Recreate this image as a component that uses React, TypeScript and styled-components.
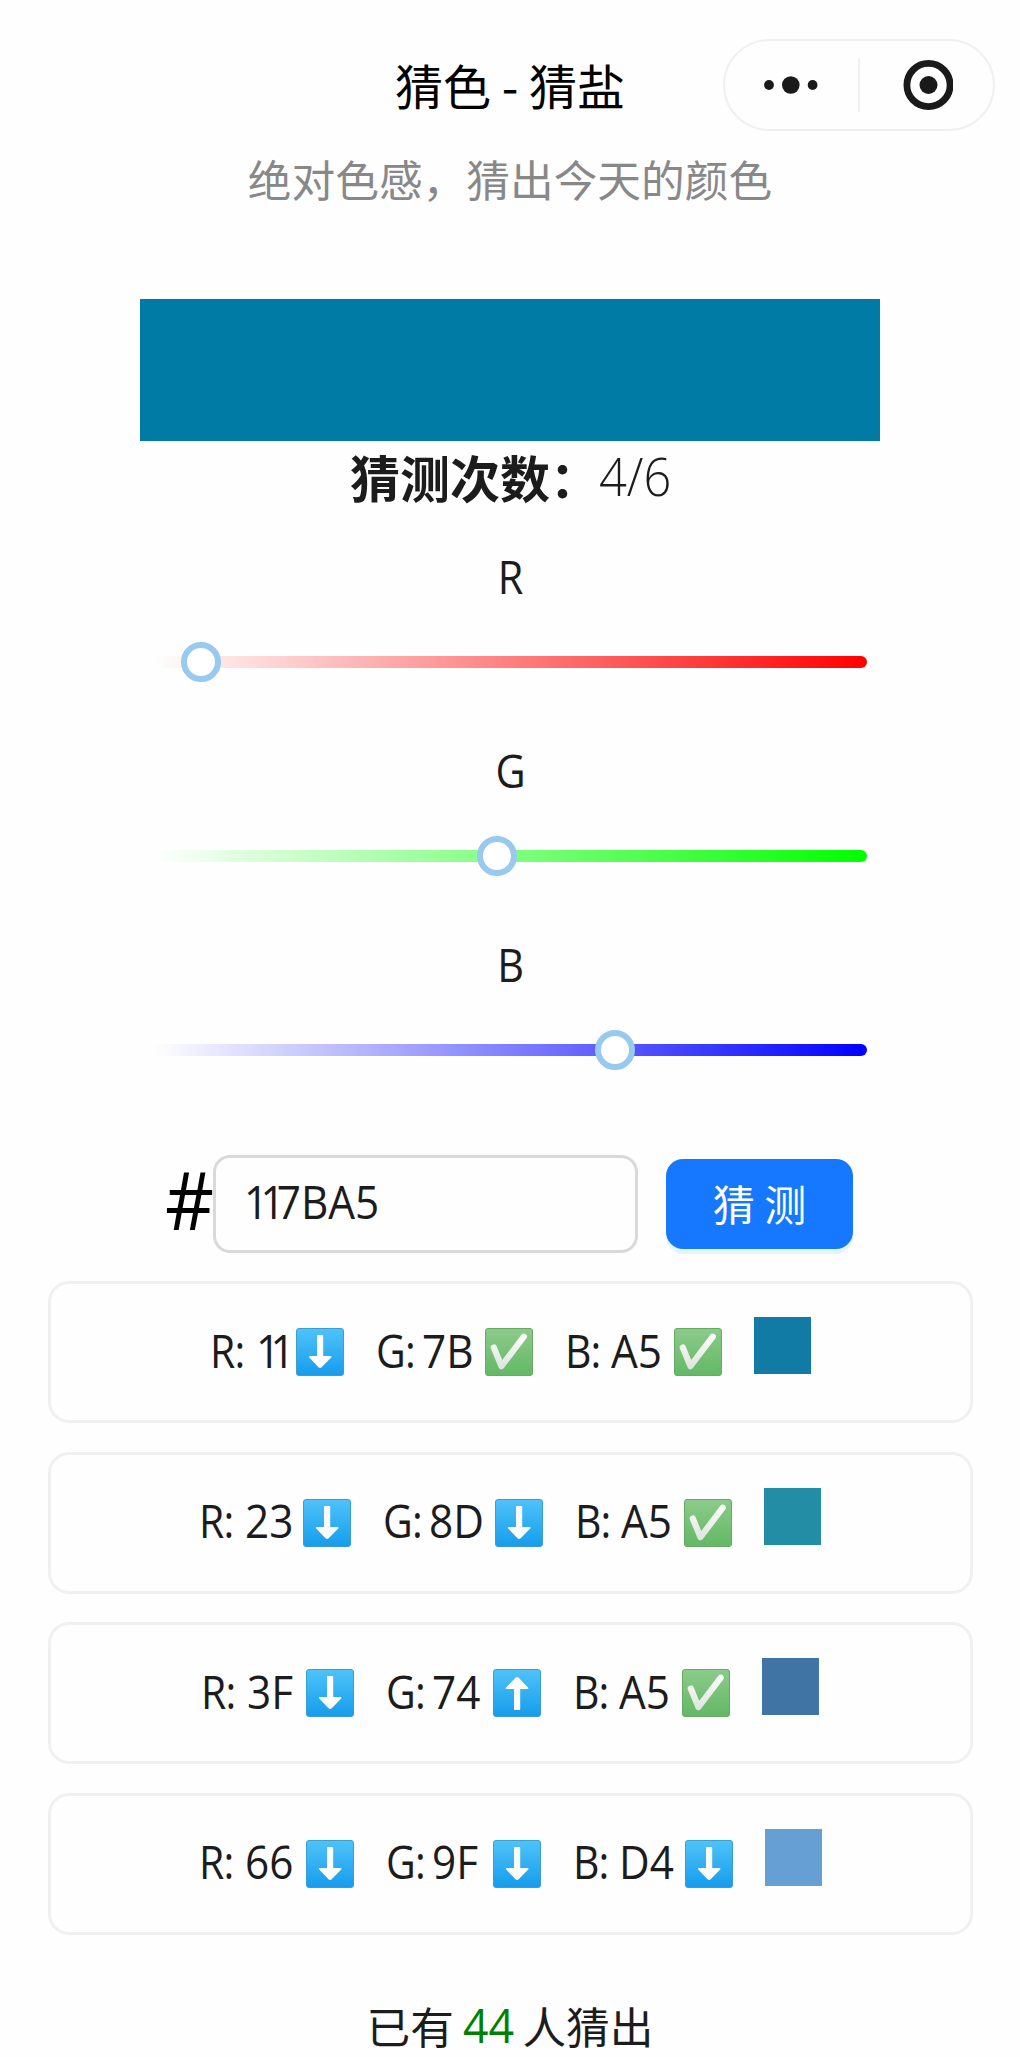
import React from "react";
import styled, { createGlobalStyle } from "styled-components";

const latin = `"Open Sans", "Noto Sans CJK SC", sans-serif`;
const cjk = `"Noto Sans CJK SC", sans-serif`;

const GlobalStyle = createGlobalStyle`
  * { box-sizing: border-box; }
  body { margin: 0; background: #fefefe; }
`;

const Page = styled.main`
  display: flex;
  flex-direction: column;
  align-items: center;
  width: 1020px;
  height: 2057px;
  padding-top: 39px;
  overflow: hidden;
  background: #fefefe;
  color: #1c1c1c;
  font-family: ${cjk};
`;

const Header = styled.header`
  display: grid;
  grid-template-columns: 1fr auto 1fr;
  align-items: center;
  width: 100%;
  height: 92px;
  padding: 0 25px;
`;

const Title = styled.h1`
  grid-column: 2;
  margin: 0;
  font-size: 48px;
  font-weight: 400;
  line-height: 91px;
  height: 92px;
  color: #000;
  white-space: nowrap;
`;

const Capsule = styled.div`
  justify-self: end;
  display: flex;
  align-items: center;
  width: 272px;
  height: 92px;
  border: 2px solid #f0f0f0;
  border-radius: 46px;
`;

const CapsuleButton = styled.button`
  flex: 1;
  display: flex;
  align-items: center;
  justify-content: center;
  height: 100%;
  padding: 0;
  border: 0;
  background: none;
`;

const CapsuleDivider = styled.span`
  width: 2px;
  height: 54px;
  background: #f0f0f0;
`;

const Subtitle = styled.p`
  margin: 17px 0 1px;
  font-size: 43.7px;
  font-weight: 400;
  line-height: 60px;
  color: #888;
  white-space: nowrap;
`;

const Preview = styled.div`
  width: 740px;
  height: 142px;
  margin-top: 90px;
  background: #007ba5;
`;

const Attempts = styled.div`
  display: flex;
  width: 320px;
  height: 70px;
  line-height: 70px;
  white-space: nowrap;
`;

const AttemptsLabel = styled.strong`
  width: 249px;
  font-size: 50px;
  font-weight: 700;
`;

const AttemptsValue = styled.span`
  font-family: ${latin};
  font-size: 53px;
  font-weight: 360;
  line-height: 70px;
  transform: scaleX(0.92);
  transform-origin: left;
`;

const Sliders = styled.section`
  display: flex;
  flex-direction: column;
  gap: 63px;
  width: 713px;
  margin-top: 40px;
`;

const Channel = styled.div`
  display: flex;
  flex-direction: column;
  gap: 41px;
`;

const ChannelName = styled.div`
  height: 50px;
  font-family: ${latin};
  font-size: 46px;
  line-height: 51px;
  text-align: center;
  transform: scaleX(0.9);
`;

const Track = styled.div`
  display: flex;
  align-items: center;
  position: relative;
  height: 40px;
`;

const Rail = styled.div<{ $color: string }>`
  width: 100%;
  height: 12px;
  border-radius: 6px;
  background: linear-gradient(to right, transparent, ${(p) => p.$color});
`;

const Handle = styled.span`
  position: absolute;
  top: 0;
  width: 40px;
  height: 40px;
  border: 6px solid #98c9ef;
  border-radius: 50%;
  background: #fff;
  transform: translateX(-50%);
`;

const GuessForm = styled.div`
  display: flex;
  align-items: center;
  width: 688px;
  height: 97px;
  margin-top: 85px;
`;

const Hash = styled.span`
  display: flex;
  justify-content: center;
  width: 47px;
  padding-bottom: 11px;
  font-family: ${latin};
  font-size: 80px;
  line-height: 87px;
  color: #000;
  transform: scaleX(0.95);
`;

const HexField = styled.div`
  display: flex;
  align-items: center;
  width: 425px;
  height: 98px;
  padding: 0 0 5px 28px;
  border: 3px solid #d9d9d9;
  border-radius: 17px;
  font-family: ${latin};
  font-size: 46px;
`;

const HexValue = styled.span`
  transform: scaleX(0.92);
  transform-origin: left;
`;

const NarrowOnes = styled.span`
  letter-spacing: -8.5px;
`;

const SubmitButton = styled.button`
  width: 187px;
  height: 90px;
  margin-left: 28px;
  padding: 0 0 3px;
  border: 0;
  border-radius: 17px;
  background: #1677ff;
  box-shadow: 0 5px 0 #e4f5fc;
  color: #fff;
  font-family: ${cjk};
  font-size: 42px;
  line-height: 87px;
  white-space: pre;
`;

const History = styled.ul`
  display: flex;
  flex-direction: column;
  gap: 28.5px;
  width: 925px;
  margin: 29px 0 0;
  padding: 0;
  list-style: none;
`;

const GuessCard = styled.li`
  display: flex;
  align-items: center;
  justify-content: center;
  height: 142px;
  border: 3px solid #f0f0f0;
  border-radius: 21px;
`;

const Reading = styled.div<{ $width: number }>`
  display: flex;
  align-items: center;
  width: ${(p) => p.$width}px;
  margin-right: 32px;
  font-family: ${latin};
  font-size: 46px;
  line-height: 56px;
  white-space: nowrap;
`;

const ReadingName = styled.span`
  width: 46px;
  padding-bottom: 5px;
  letter-spacing: -1px;
  transform: scaleX(0.89);
  transform-origin: left;
`;

const ReadingValue = styled.span<{ $tight?: boolean }>`
  flex: 1;
  padding-bottom: 5px;
  letter-spacing: ${(p) => (p.$tight ? "-10.5px" : "0")};
  transform: scaleX(0.92);
  transform-origin: left;
`;

const Chip = styled.span<{ $color: string }>`
  width: 57px;
  height: 57px;
  margin-bottom: 13px;
  background: ${(p) => p.$color};
`;

const Footer = styled.footer`
  display: flex;
  justify-content: space-between;
  width: 287px;
  margin-top: 66px;
  font-size: 43.7px;
  line-height: 48px;
  white-space: nowrap;
`;

const WinnerCount = styled.span`
  font-family: ${latin};
  font-size: 48px;
  color: #008000;
  transform: scaleX(0.93);
`;

type Mark = "up" | "down" | "ok";

const MarkIcon = ({ mark }: { mark: Mark }) => {
  const id = React.useId();
  const ok = mark === "ok";
  return (
    <svg width="48" height="48" viewBox="0 0 48 48">
      <defs>
        <linearGradient id={id} x1="0" y1="0" x2="0" y2="1">
          <stop offset="0" stopColor={ok ? "#8ccb8a" : "#4fc3f9"} />
          <stop offset="1" stopColor={ok ? "#63b865" : "#169cec"} />
        </linearGradient>
        <linearGradient id={id + "c"} x1="0" y1="0" x2="0" y2="1">
          <stop offset="0" stopColor="#fafdfa" />
          <stop offset="1" stopColor="#dfe6df" />
        </linearGradient>
      </defs>
      <rect
        x="0.5"
        y="0.5"
        width="47"
        height="47"
        rx="2.5"
        fill={`url(#${id})`}
        stroke={ok ? "#68a968" : "#3a9fcb"}
      />
      {ok ? (
        <path
          d="M8.8 19.5L16.4 38.2L38.8 8.7"
          fill="none"
          stroke={`url(#${id}c)`}
          strokeWidth="6.2"
          strokeLinecap="round"
          strokeLinejoin="round"
        />
      ) : (
        <path
          d="M21.8 7h4.6q.8 0 .8.8V28h7.3q1.7 0 .7 1.5L25.7 39.2q-1.6 1.6-3.2 0L13.2 29.5q-1-1.5.7-1.5H21V7.8q0-.8.8-.8z"
          fill="#fdfdfd"
          transform={mark === "up" ? "rotate(180 24.1 24)" : undefined}
        />
      )}
    </svg>
  );
};

const channels = [
  { name: "R", value: 0x11, color: "#ff0000" },
  { name: "G", value: 0x7b, color: "#00ff00" },
  { name: "B", value: 0xa5, color: "#0000ff" },
];

type Cell = { name: string; value: string; mark: Mark; width: number };

const guesses: { color: string; cells: Cell[] }[] = [
  {
    color: "#117ba5",
    cells: [
      { name: "R", value: "11", mark: "down", width: 134 },
      { name: "G", value: "7B", mark: "ok", width: 157 },
      { name: "B", value: "A5", mark: "ok", width: 157 },
    ],
  },
  {
    color: "#238da5",
    cells: [
      { name: "R", value: "23", mark: "down", width: 152 },
      { name: "G", value: "8D", mark: "down", width: 160 },
      { name: "B", value: "A5", mark: "ok", width: 157 },
    ],
  },
  {
    color: "#3f74a5",
    cells: [
      { name: "R", value: "3F", mark: "down", width: 153 },
      { name: "G", value: "74", mark: "up", width: 155 },
      { name: "B", value: "A5", mark: "ok", width: 157 },
    ],
  },
  {
    color: "#669fd4",
    cells: [
      { name: "R", value: "66", mark: "down", width: 155 },
      { name: "G", value: "9F", mark: "down", width: 155 },
      { name: "B", value: "D4", mark: "down", width: 160 },
    ],
  },
];

export default function App() {
  return (
    <>
      <GlobalStyle />
      <Page>
        <Header>
          <Title>猜色 - 猜盐</Title>
          <Capsule>
            <CapsuleButton aria-label="more">
              <svg width="56" height="20" viewBox="0 0 56 20" fill="#1a1a1a">
                <circle cx="5" cy="10" r="4.9" />
                <circle cx="26.8" cy="10" r="8.8" />
                <circle cx="48.6" cy="10" r="4.9" />
              </svg>
            </CapsuleButton>
            <CapsuleDivider />
            <CapsuleButton aria-label="close">
              <svg width="52" height="52" viewBox="0 0 52 52">
                <circle cx="27.5" cy="26" r="21.6" fill="none" stroke="#1a1a1a" strokeWidth="6.8" />
                <circle cx="27.5" cy="26" r="9" fill="#1a1a1a" />
              </svg>
            </CapsuleButton>
          </Capsule>
        </Header>

        <Subtitle>绝对色感，猜出今天的颜色</Subtitle>
        <Preview />
        <Attempts>
          <AttemptsLabel>猜测次数：</AttemptsLabel>
          <AttemptsValue>4/6</AttemptsValue>
        </Attempts>

        <Sliders>
          {channels.map((c) => (
            <Channel key={c.name}>
              <ChannelName>{c.name}</ChannelName>
              <Track>
                <Rail $color={c.color} />
                <Handle style={{ left: `${(c.value / 255) * 100}%` }} />
              </Track>
            </Channel>
          ))}
        </Sliders>

        <GuessForm>
          <Hash>#</Hash>
          <HexField>
            <HexValue>
              <NarrowOnes>11</NarrowOnes>7BA5
            </HexValue>
          </HexField>
          <SubmitButton>猜 测</SubmitButton>
        </GuessForm>

        <History>
          {guesses.map((g) => (
            <GuessCard key={g.color}>
              {g.cells.map((c) => (
                <Reading key={c.name} $width={c.width}>
                  <ReadingName>{c.name}:</ReadingName>
                  <ReadingValue $tight={c.value === "11"}>{c.value}</ReadingValue>
                  <MarkIcon mark={c.mark} />
                </Reading>
              ))}
              <Chip $color={g.color} />
            </GuessCard>
          ))}
        </History>

        <Footer>
          <span>已有</span>
          <WinnerCount>44</WinnerCount>
          <span>人猜出</span>
        </Footer>
      </Page>
    </>
  );
}
